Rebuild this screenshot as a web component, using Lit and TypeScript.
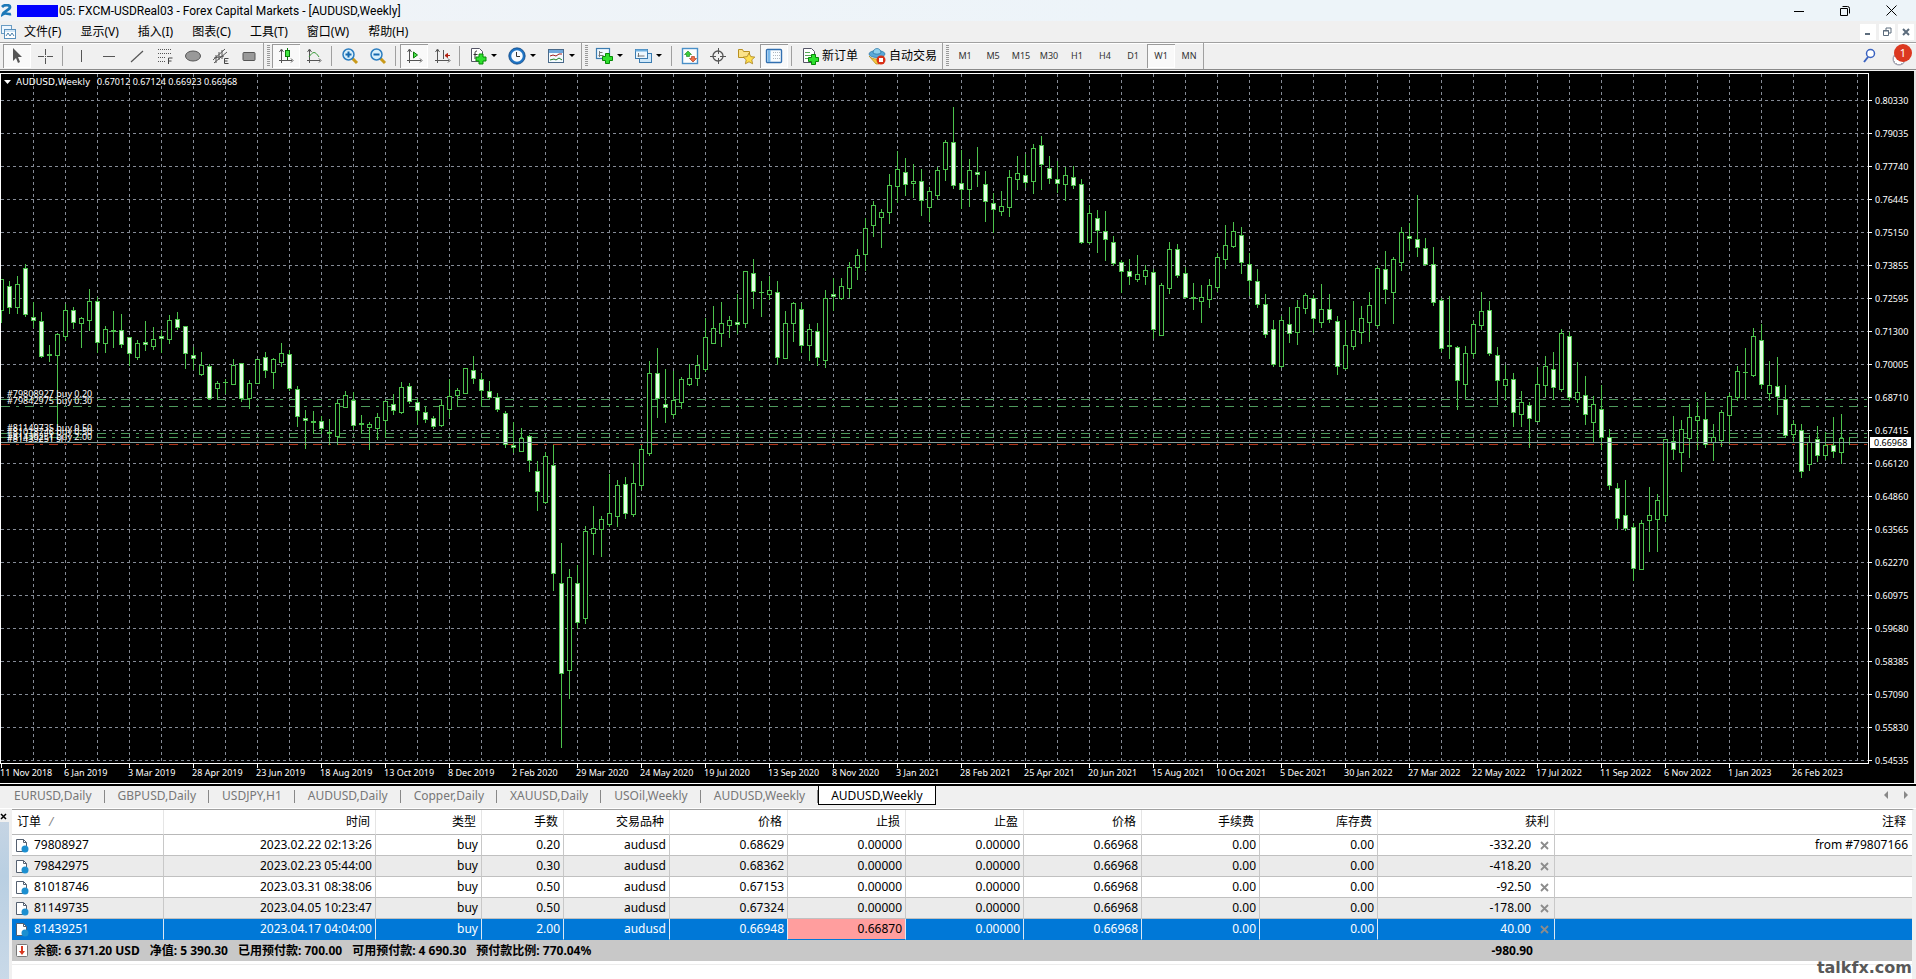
import { LitElement, html, svg, css } from "lit";
import { customElement, state } from "lit/decorators.js";
import { classMap } from "lit/directives/class-map.js";

/* Weekly bars, oldest first: kind (u hollow, d filled), high, body top, body bottom, low in plot rows. */
const BARS = `
u 279 279 310 322|d 281 286 307 313|u 276 284 307 313|d 264 268 314 316|d 302 317 320 327|d 312 321 356 357|d 345 354 355 361|u 333 334 355 433
u 304 310 336 340|d 307 310 322 328|u 317 318 323 347|u 289 301 320 330|d 297 301 342 352|u 326 329 343 352|d 311 330 331 347|d 314 330 344 347
d 337 337 353 365|u 340 343 357 359|d 321 342 344 350|u 327 339 346 349|d 330 336 338 352|u 315 320 339 343|d 312 319 327 329|d 326 326 353 368
d 347 355 358 369|u 352 365 374 375|d 364 366 398 399|u 381 383 388 398|d 379 382 382 393|u 359 365 384 384|d 363 363 398 401|u 380 383 398 408
u 359 359 383 383|d 352 357 370 377|u 358 359 372 388|u 343 353 362 366|d 350 354 388 390|d 386 389 416 426|d 410 418 420 448|d 411 421 422 433
d 416 421 428 433|d 419 432 433 444|u 400 403 436 444|u 391 395 407 407|d 392 400 425 429|d 415 423 424 432|u 422 424 427 449|u 413 417 428 439
u 401 401 420 437|d 394 404 410 414|u 382 387 412 413|d 383 386 401 403|d 398 402 410 424|d 407 412 419 422|d 416 418 426 428|u 400 405 425 426
u 379 396 409 417|u 388 390 395 406|u 368 368 393 393|d 356 370 378 383|d 373 379 390 405|d 381 391 397 398|d 393 397 409 411|d 411 413 444 447
d 422 445 447 452|u 428 438 451 451|d 435 436 460 471|d 461 471 491 510|u 452 456 502 503|d 445 465 573 590|d 543 583 673 747|u 569 577 670 698
d 565 583 622 628|u 526 531 618 623|u 506 528 533 554|u 516 519 529 556|u 474 513 524 526|u 480 485 516 526|d 477 484 513 518|u 463 483 514 516
u 445 449 485 489|u 361 373 453 455|d 348 373 398 417|d 369 404 407 422|u 371 400 414 417|u 377 379 402 408|u 364 378 384 385|u 355 365 378 385
u 318 337 369 371|u 306 328 343 343|u 302 323 333 346|u 316 320 325 337|d 294 322 324 333|u 271 271 323 327|d 259 273 291 308|d 281 292 292 316
u 276 290 294 299|d 281 292 357 364|u 311 323 358 358|u 302 303 323 341|d 303 309 345 352|u 324 329 345 360|d 323 331 357 365|u 290 298 360 367
d 278 294 296 310|u 278 286 298 299|u 262 267 288 297|u 249 255 267 279|u 218 228 254 270|u 201 205 225 236|u 209 212 217 247|u 174 185 212 223
u 151 169 186 202|d 158 172 184 195|u 164 181 183 197|d 169 181 200 215|u 187 191 207 221|u 167 170 195 199|u 140 142 169 180|d 107 142 185 188
d 150 183 189 208|u 159 170 189 206|d 147 172 174 186|d 171 184 201 221|d 193 203 209 232|u 191 206 211 215|u 170 177 207 216|u 156 173 179 189
d 154 175 182 187|u 144 148 181 193|d 136 145 164 189|d 156 168 178 183|d 161 179 183 192|u 167 175 184 200|d 166 177 185 188|d 179 184 242 243
u 205 213 242 243|d 210 218 230 252|d 211 231 239 260|d 236 242 263 265|d 260 262 271 292|d 259 271 276 284|u 255 274 279 281|u 265 270 276 284
d 269 272 329 338|u 283 285 335 335|u 242 249 288 293|d 244 249 275 277|d 267 273 297 298|d 283 297 298 309|u 285 297 301 322|u 279 285 299 307
u 253 257 287 291|u 225 245 259 268|u 222 231 246 247|d 227 235 262 273|d 253 264 280 295|d 269 281 304 307|d 294 304 334 337|d 320 329 364 366
u 316 320 366 367|d 307 324 333 342|u 300 307 332 344|u 293 295 308 313|d 295 298 318 332|u 284 309 322 327|d 294 309 319 322|d 316 321 366 374
u 320 345 368 369|u 301 330 346 349|u 306 318 332 343|u 292 305 322 341|u 266 268 325 327|d 251 269 289 303|u 257 259 292 323|u 227 232 262 270
d 223 236 238 250|d 195 239 247 256|d 238 248 264 265|d 247 264 302 305|d 298 300 348 351|d 296 345 346 358|d 346 347 380 409|u 346 353 384 398
u 321 324 353 357|u 292 311 325 329|d 301 310 353 355|d 347 355 380 404|u 365 379 385 399|d 373 379 412 426|u 391 402 414 426|d 402 405 418 447
u 367 384 421 421|u 356 366 385 396|d 352 369 387 399|u 329 333 389 391|d 332 336 397 400|u 362 392 399 402|d 376 395 414 424|u 396 404 422 442
d 385 409 437 449|d 429 437 485 489|d 483 488 518 528|d 480 515 528 530|d 523 527 568 580|u 520 523 569 569|u 487 515 520 551|u 494 500 519 551
u 439 439 515 521|d 416 441 449 459|u 420 429 452 471|u 404 417 438 457|u 402 416 420 449|d 392 419 444 447|u 424 437 442 460|u 410 412 440 446
u 393 396 415 443|u 366 371 397 400|d 348 372 372 398|u 328 336 375 376|d 324 340 384 388|u 361 385 393 400|d 357 386 396 414|d 385 399 435 437
u 420 424 434 442|d 424 430 471 477|u 435 442 464 470|d 426 439 455 461|u 432 445 455 459|d 417 445 451 457|u 414 438 452 463|d 437 442 442 444`
  .trim()
  .split(/[|\n]/)
  .map((s) => {
    const [kind, ...n] = s.trim().split(" ");
    const [high, top, bottom, low] = n.map(Number);
    return { kind, high, top, bottom, low };
  });

const PRICES = ["0.80330", "0.79035", "0.77740", "0.76445", "0.75150", "0.73855", "0.72595", "0.71300", "0.70005", "0.68710", "0.67415", "0.66120", "0.64860", "0.63565", "0.62270", "0.60975", "0.59680", "0.58385", "0.57090", "0.55830", "0.54535"];

const DATES = ["11 Nov 2018", "6 Jan 2019", "3 Mar 2019", "28 Apr 2019", "23 Jun 2019", "18 Aug 2019", "13 Oct 2019", "8 Dec 2019", "2 Feb 2020", "29 Mar 2020", "24 May 2020", "19 Jul 2020", "13 Sep 2020", "8 Nov 2020", "3 Jan 2021", "28 Feb 2021", "25 Apr 2021", "20 Jun 2021", "15 Aug 2021", "10 Oct 2021", "5 Dec 2021", "30 Jan 2022", "27 Mar 2022", "22 May 2022", "17 Jul 2022", "11 Sep 2022", "6 Nov 2022", "1 Jan 2023", "26 Feb 2023"];

const LEVELS = [
  { y: 399, cls: "open", text: "#79808927 buy 0.20" },
  { y: 406, cls: "open", text: "#79842975 buy 0.30" },
  { y: 433, cls: "open", text: "#81149735 buy 0.50" },
  { y: 437, cls: "open", text: "#81018746 buy 0.50" },
  { y: 442, cls: "", text: "#81439251 buy 2.00" },
  { y: 444, cls: "stop", text: "#81439251 sl" },
];

const MENUS = ["文件(F)", "显示(V)", "插入(I)", "图表(C)", "工具(T)", "窗口(W)", "帮助(H)"];
const FRAMES = ["M1", "M5", "M15", "M30", "H1", "H4", "D1", "W1", "MN"];
const TABS = ["EURUSD,Daily", "GBPUSD,Daily", "USDJPY,H1", "AUDUSD,Daily", "Copper,Daily", "XAUUSD,Daily", "USOil,Weekly", "AUDUSD,Weekly", "AUDUSD,Weekly"];
const HEADS = ["时间", "类型", "手数", "交易品种", "价格", "止损", "止盈", "价格", "手续费", "库存费", "获利", "注释"];
const WIDTHS = [152, 212, 106, 82, 106, 118, 118, 118, 118, 118, 118, 177];
const ORDERS = [
  ["79808927", "2023.02.22 02:13:26", "buy", "0.20", "audusd", "0.68629", "0.00000", "0.00000", "0.66968", "0.00", "0.00", "-332.20", "from #79807166"],
  ["79842975", "2023.02.23 05:44:00", "buy", "0.30", "audusd", "0.68362", "0.00000", "0.00000", "0.66968", "0.00", "0.00", "-418.20", ""],
  ["81018746", "2023.03.31 08:38:06", "buy", "0.50", "audusd", "0.67153", "0.00000", "0.00000", "0.66968", "0.00", "0.00", "-92.50", ""],
  ["81149735", "2023.04.05 10:23:47", "buy", "0.50", "audusd", "0.67324", "0.00000", "0.00000", "0.66968", "0.00", "0.00", "-178.00", ""],
  ["81439251", "2023.04.17 04:04:00", "buy", "2.00", "audusd", "0.66948", "0.66870", "0.00000", "0.66968", "0.00", "0.00", "40.00", ""],
];
const SUMMARY = ["余额: 6 371.20 USD", "净值: 5 390.30", "已用预付款: 700.00", "可用预付款: 4 690.30", "预付款比例: 770.04%"];

const plus = (x: number, y: number) => svg`<path d="M${x + 3} ${y}h4v3h3v4h-3v3h-4v-3h-3v-4h3z" fill="#2ee02e" stroke="#078a07"/>`;

/* Toolbar glyphs, each on an 18 x 18 grid. */
const GLYPHS: Record<string, unknown> = {
  cursor: svg`<path d="M5 1v13l3-3 2 5 2-1-2-5h4z" fill="#555"/>`,
  cross: svg`<path d="M9.500 2v6m0 3v6M2 9.500h6m3 0h6" stroke="#555" fill="none"/><path d="M9 9h1v1h-1z" fill="#555"/>`,
  vline: svg`<path d="M9.500 3v12" stroke="#555"/>`,
  hline: svg`<path d="M3 9.500h12" stroke="#555"/>`,
  trend: svg`<path d="M3 15 15 4" stroke="#555" stroke-width="1.200"/>`,
  fibo: svg`<path d="M2 2.500h14M2 6.500h14M2 10.500h8M2 14.500h8" stroke="#555" stroke-dasharray="1 1"/><path d="M12.500 17v-6h4m-4 3h3" stroke="#444" fill="none"/>`,
  ellipse: svg`<ellipse cx="9" cy="9" rx="7.500" ry="5" fill="#999" stroke="#555"/>`,
  channel: svg`<path d="M1 13 13 2M2 16 15 5M4 8v8M7 5v8M10 3v9M2 11l10-2" stroke="#555"/><path d="M16.500 11.500h-4v5h4m-4-2.500h3" stroke="#444" fill="none"/>`,
  rect: svg`<rect x="3" y="5.500" width="12" height="8" rx="1" fill="#999" stroke="#555"/>`,
  candle: svg`<path d="M4.500 3v13M2 13.500h13M4.500 2l-2 3m2-3 2 3M16 13.500l-2-2m2 2-2 2" stroke="#555" fill="none"/><path d="M10.500 1v12" stroke="#0a7a0a"/><rect x="8.500" y="3.500" width="4" height="6" fill="#3ee83e" stroke="#0a7a0a"/>`,
  line: svg`<path d="M4.500 3v13M2 13.500h13M4.500 2l-2 3m2-3 2 3M16 13.500l-2-2m2 2-2 2" stroke="#555" fill="none"/><path d="M4 10c4-6 6-6 10 0" stroke="#3a9a3a" fill="none"/>`,
  zoomin: svg`<path d="m11 11 5 5" stroke="#c99a1b" stroke-width="3"/><circle cx="7.500" cy="7.500" r="5.500" fill="#d9f0fb" stroke="#2c7ec0" stroke-width="1.500"/><path d="M4.500 7.500h6m-3-3v6" stroke="#1569b0" stroke-width="2"/>`,
  zoomout: svg`<path d="m11 11 5 5" stroke="#c99a1b" stroke-width="3"/><circle cx="7.500" cy="7.500" r="5.500" fill="#d9f0fb" stroke="#2c7ec0" stroke-width="1.500"/><path d="M4.500 7.500h6" stroke="#1569b0" stroke-width="2"/>`,
  scroll: svg`<path d="M4.500 3v13M2 13.500h14M4.500 2l-2 3m2-3 2 3M17 13.500l-2-2m2 2-2 2" stroke="#555" fill="none"/><path d="m8.500 5 4 3-4 3z" fill="#4ae04a" stroke="#0a7a0a"/>`,
  shift: svg`<path d="M4.500 3v13M2 13.500h14M4.500 2l-2 3m2-3 2 3M17 13.500l-2-2m2 2-2 2M10.500 3v9" stroke="#555" fill="none"/><path d="M12 8.500h5m-5 0 2.500-2v4z" stroke="#b02010" fill="#d03020"/>`,
  indicator: svg`<path d="M2.500 1.500h8l3 3v10h-11z" fill="#fff" stroke="#556"/><path d="M8 4c-2 0-2 1-2 3v5M4.500 7.500h4" stroke="#333" fill="none"/>${plus(7, 7)}`,
  clock: svg`<circle cx="9" cy="9" r="7" fill="#f6fbff" stroke="#1f74c4" stroke-width="2.500"/><circle cx="9" cy="9" r="8.200" fill="none" stroke="#0d3f78" stroke-width=".7"/><path d="M8.500 5v4.500h3.500" stroke="#333" fill="none"/>`,
  template: svg`<rect x="1.500" y="2.500" width="15" height="13" fill="#f4fbff" stroke="#4a6a8a"/><path d="M2 4.500h14" stroke="#6fa8dc" stroke-width="3"/><path d="m3 9 3-1 3 1 3-2 3 0" stroke="#a02020" fill="none"/><path d="m3 13 4-1 2 1 3-2 3 2" stroke="#208020" fill="none"/>`,
  newchart: svg`<rect x="1.500" y="1.500" width="13" height="10" fill="#eef8ff" stroke="#3c7cb0" stroke-width="1.200"/><path d="M4.500 4v6m-1-1.500h5m-4-3h3" stroke="#777"/>${plus(7.500, 6.500)}`,
  windows: svg`<rect x="5.500" y="6.500" width="12" height="9" fill="#cfe8fa" stroke="#3c7cb0"/><rect x="1.500" y="2.500" width="12" height="9" fill="#eef8ff" stroke="#3c7cb0"/><path d="M1.500 3.500h12" stroke="#6fb0e0" stroke-width="2"/><path d="M4.500 6v4m-1-1h7" stroke="#777"/>`,
  market: svg`<rect x="1.500" y="1.500" width="15" height="15" fill="#fdfeff" stroke="#4a90c8" stroke-width="1.400"/><path d="m7 4 3.500 3.500h-2v2h-3v-2h-2z" fill="#3ad03a" stroke="#157a15" stroke-width=".6"/><path d="m12 15-3.500-3.500h2v-2h3v2h2z" fill="#f07048" stroke="#a83010" stroke-width=".6"/>`,
  target: svg`<circle cx="9" cy="9" r="5" fill="none" stroke="#555" stroke-width="1.300"/><path d="M9.500 1v6m0 4v6M1 9.500h6m4 0h6" stroke="#555"/>`,
  folder: svg`<path d="M1.500 10.500v-8h4l1 2h6v6z" fill="#fbe28a" stroke="#b89020"/><path d="m12 6 1.800 3.600 4 .5-3 2.700.8 4-3.600-2-3.600 2 .8-4-3-2.700 4-.5z" fill="#ffdf50" stroke="#a8801c" stroke-width=".8"/>`,
  navigator: svg`<rect x="1.500" y="2.500" width="15" height="13" rx="1" fill="#fafdff" stroke="#3370b0" stroke-width="1.400"/><path d="M4 3v12" stroke="#7ab8ea" stroke-width="3"/><path d="M8 5.500h8M8 8.500h8M8 11.500h8" stroke="#b0b8c0" stroke-dasharray="1 1"/>`,
  order: svg`<path d="M2.500 1.500h8l3 3v11h-11z" fill="#fff" stroke="#556"/><path d="M4 5.500h5M4 8.500h6M4 11.500h4" stroke="#58a858"/>${plus(7.500, 7.500)}`,
  auto: svg`<path d="M1 9c3 4 12 4 15 0l-5 8H8z" fill="#f4c840" stroke="#b08818" stroke-width=".7"/><ellipse cx="9" cy="7" rx="8" ry="3.500" fill="#5aa8d8" stroke="#24709f" stroke-width=".7"/><path d="M5 6c0-6 8-6 8 0-2 1.500-6 1.500-8 0z" fill="#8fd0ee" stroke="#24709f" stroke-width=".7"/><circle cx="13" cy="13" r="4.500" fill="#d83018"/><rect x="11" y="11" width="4" height="4" fill="#fff"/>`,
};

const glyph = (name: string) => html`<svg class="glyph" width="18" height="18" aria-hidden="true">${GLYPHS[name]}</svg>`;

const SHEET = html`<svg class="sheet" width="14" height="15" aria-hidden="true">
  <path d="M1.500 1.500h7l3 3v9h-10z" fill="#fff" stroke="#556070" />
  <path d="M8.500 1.500v3h3" fill="none" stroke="#556070" />
  <circle cx="10" cy="11" r="3.500" fill="#1c8fd0" />
</svg>`;

@customElement("app-root")
export class AppRoot extends LitElement {
  @state() private frame = "W1";
  @state() private tab = 8;

  static styles = css`
    :host {
      display: flex;
      flex-direction: column;
      min-height: 100vh;
      position: relative;
      overflow: hidden;
      background: #f0f0f0;
      color: #000;
      font: 12px/16px "Noto Sans", "Noto Sans CJK SC", sans-serif;
    }
    * { box-sizing: border-box; }
    button { font: inherit; color: inherit; background: none; border: 0; padding: 0; margin: 0; }
    svg { display: block; flex: none; }

    .title { display: flex; align-items: center; height: 21px; padding: 0 16px 0 1px; background: linear-gradient(90deg, #f0f3f7, #edf4f9 60%); }
    .redacted { width: 41px; height: 12px; margin: 0 1px 0 5px; background: #0000ff; }
    .caption { flex: 1; font-family: Roboto, sans-serif; white-space: nowrap; }
    .sys { display: flex; gap: 28px; }
    .sys button { width: 18px; height: 18px; display: grid; place-items: center; }

    .menubar { display: flex; align-items: center; height: 21px; padding: 0 2px 0 1px; }
    .menus { display: flex; flex: 1; gap: 19px; margin-left: 8px; }
    .mdi { display: flex; gap: 3px; }
    .mdi button { width: 16px; height: 16px; background: #fff; display: grid; place-items: center; }

    .toolbar { display: flex; align-items: stretch; height: 28px; padding-left: 3px; border-top: 1px solid #a0a0a0; border-bottom: 1px solid #8a8a8a; box-shadow: inset 0 1px #fff; }
    .group { display: flex; align-items: center; padding: 2px 0; border-right: 1px solid #a0a0a0; }
    .grip { width: 8px; align-self: stretch; background: repeating-linear-gradient(#999 0 1px, transparent 1px 2px) 3px 2px / 3px 22px no-repeat; }
    .tool { width: 28px; height: 24px; display: flex; align-items: center; justify-content: center; }
    .tool.on, .frame.on { background: #f9f9f9; box-shadow: inset 1px 1px #9a9a9a, inset -1px -1px #fff; }
    .tool.drop { width: 39px; justify-content: flex-start; gap: 4px; padding-left: 5px; }
    .tool.text { width: auto; gap: 3px; padding: 0 5px; }
    .sep { width: 8px; height: 20px; background: linear-gradient(#a0a0a0, #a0a0a0) 3px 0 / 1px 100% no-repeat; }
    .frame { width: 28px; height: 24px; font-size: 9px; color: #333; }
    .end { display: flex; align-items: center; gap: 16px; margin-left: auto; padding-right: 4px; }
    .alerts { display: flex; align-items: flex-start; height: 24px; padding-left: 2px; background: radial-gradient(circle at 7px 15px, #fff 0 5px, #a8a8b4 5px 6px, transparent 7px); }
    .badge { width: 18px; height: 18px; border-radius: 9px; background: #dc3820; color: #fff; font-size: 11px; line-height: 18px; text-align: center; }

    .chart { display: flex; background: #000; color: #fff; padding-top: 2px; margin-top: 1px; font-size: 9px; line-height: 11px; border-right: 2px solid #e4e4e4; }
    .main { flex: 1; min-width: 0; }
    .plot { height: 691px; border: 1px solid #fff; position: relative; overflow: hidden; }
    .plot text { fill: #fff; }
    .plot .symbol { font-family: "DejaVu Sans", sans-serif; }
    .grid { stroke: #858b96; stroke-dasharray: 3 3; shape-rendering: crispEdges; }
    .bars { stroke: #4cc24c; fill: #000; shape-rendering: crispEdges; }
    .bars .d { fill: #e4ffe4; }
    .open { stroke: #4e9a5c; stroke-dasharray: 9 6 3 6; shape-rendering: crispEdges; }
    .stop { stroke: #b03418; stroke-dasharray: 9 6 3 6; shape-rendering: crispEdges; }
    .bid { stroke: #7f9c9c; shape-rendering: crispEdges; }
    .dates { display: flex; height: 20px; overflow: hidden; }
    .dates span { flex: none; width: 64px; padding-top: 3px; white-space: nowrap; background: linear-gradient(#fff, #fff) 1px 0 / 1px 4px no-repeat; }
    .scale { width: 45px; padding-top: 11px; position: relative; }
    .scale div { height: 33px; display: flex; align-items: center; gap: 3px; }
    .scale div::before { content: ""; width: 3px; height: 1px; background: #fff; }
    .now { position: absolute; top: 364px; left: 1px; right: 3px; padding-left: 4px; background: #fff; color: #000; }

    .tabs { display: flex; height: 24px; align-items: flex-start; background: #f0f0f0; border-top: 2px solid #000; padding: 0 6px 0 1px; color: #777; outline: 1px solid #fff; outline-offset: 0; position: relative; }
    .tabs button { padding: 2px 13px 1px; position: relative; }
    .tabs button:not(.on)::after { content: ""; position: absolute; right: 0; top: 4px; height: 13px; width: 1px; background: #888; }
    .tabs button.on { color: #000; background: #fff; border: 1px solid #000; border-top: 0; padding: 2px 12px 0; }
    .arrows { display: flex; gap: 14px; margin: 5px 2px 0 auto; }

    .terminal { display: flex; flex: 1; background: #fff; }
    .rail { width: 12px; border-right: 3px solid #f0f0f0; background: linear-gradient(#c9d6e4, #b9cfe2 40%, #c9d9e8); }
    .rail button { display: block; width: 9px; height: 14px; padding-top: 3px; background: #f0f0f0; }
    .sheetwrap { flex: 1; min-width: 0; border-top: 2px solid #a0a0a0; border-right: 4px solid #f0f0f0; }
    table { width: 100%; border-collapse: separate; border-spacing: 0; table-layout: fixed; }
    th { height: 25px; padding: 0 5px; font-weight: 400; text-align: right; border-right: 1px solid #e5e5e5; border-bottom: 1px solid #b8b8b8; }
    th:first-child { text-align: left; }
    th i { color: #888; margin-left: 8px; }
    td { height: 21px; padding: 0 3px; text-align: right; white-space: nowrap; border-right: 1px solid #c8c8c8; border-bottom: 1px solid #c0c0c0; }
    td:last-child, th:last-child { border-right: 0; }
    td:last-child { padding-right: 4px; }
    th:last-child { padding-right: 6px; }
    .id, .profit { display: flex; align-items: center; }
    .id { gap: 5px; }
    .sums { display: flex; gap: 10px; }
    .profit { justify-content: flex-end; gap: 9px; padding-right: 2px; }
    tr.alt td { background: #ebebeb; }
    tr.picked td { background: #0078d7; color: #fff; border-bottom-color: #0078d7; border-right-color: #dce8f4; }
    tr.picked td.near { background: #ff9e9e; color: #000; }
    tfoot td { background: #c8c8c8; border: 0; font-weight: 700; }
    tfoot .total { padding-right: 22px; }
    .foot { border-top: 1px solid #ececec; margin-top: 3px; }
    .mark { position: absolute; right: 4px; bottom: 2px; font: 700 16px/19px "DejaVu Sans", sans-serif; color: #585858; }
  `;

  private tool(name: string, label: string, on = false) {
    return html`<button class=${classMap({ tool: true, on })} aria-label=${label}>${glyph(name)}</button>`;
  }

  private drop(name: string, label: string) {
    return html`<button class="tool drop" aria-label=${label}>${glyph(name)}<svg width="6" height="4"><path d="M0 0h6L3 3z" /></svg></button>`;
  }

  private renderToolbar() {
    const sep = html`<span class="sep"></span>`;
    return html`<div class="toolbar" role="toolbar">
      <div class="group">
        ${this.tool("cursor", "光标", true)}${this.tool("cross", "十字准线")}${sep}
        ${this.tool("vline", "垂直线")}${this.tool("hline", "水平线")}${this.tool("trend", "趋势线")}${this.tool("fibo", "斐波那契")}
        ${this.tool("ellipse", "椭圆")}${this.tool("channel", "通道")}${this.tool("rect", "矩形")}
      </div>
      <span class="grip"></span>
      <div class="group">
        ${this.tool("candle", "阴阳烛", true)}${this.tool("line", "折线图")}${sep}
        ${this.tool("zoomin", "放大")}${this.tool("zoomout", "缩小")}${sep}
        ${this.tool("scroll", "自动滚动", true)}${this.tool("shift", "图表平移")}${sep}
        ${this.drop("indicator", "技术指标")}${this.drop("clock", "时间周期")}${this.drop("template", "模板")}
      </div>
      <span class="grip"></span>
      <div class="group">
        ${this.drop("newchart", "新图表")}${this.drop("windows", "窗口")}${sep}
        ${this.tool("market", "市场报价")}${this.tool("target", "数据窗口")}${this.tool("folder", "导航")}${this.tool("navigator", "终端", true)}${sep}
        <button class="tool text">${glyph("order")}新订单</button>
        <button class="tool text">${glyph("auto")}自动交易</button>
      </div>
      <span class="grip"></span>
      <div class="group">
        ${FRAMES.map((f) => html`<button class=${classMap({ frame: true, on: f === this.frame })} @click=${() => (this.frame = f)}>${f}</button>`)}
      </div>
      <div class="end">
        <button aria-label="搜索"><svg width="14" height="16"><circle cx="8.500" cy="5.500" r="4" fill="#fff" stroke="#3a62c0" stroke-width="1.500" /><path d="m6 9-4 5" stroke="#3a62c0" stroke-width="2" /></svg></button>
        <span class="alerts"><span class="badge">1</span></span>
      </div>
    </div>`;
  }

  private renderChart() {
    return html`<div class="chart">
      <div class="main">
        <div class="plot">
          <svg width="100%" height="689">
            <g transform="translate(-1 -74)">
              <g class="grid">
                ${Array.from({ length: 60 }, (_, i) => svg`<path d="M${33.5 + 32 * i} 74v689" />`)}
                ${PRICES.map((_, i) => svg`<line x1="1" x2="102%" y1=${100.5 + 33 * i} y2=${100.5 + 33 * i} />`)}
              </g>
              ${LEVELS.filter((l) => l.cls).map((l) => svg`<line class=${l.cls} x1="1" x2="102%" y1=${l.y + 0.5} y2=${l.y + 0.5} />`)}
              <g class="bars">
                ${BARS.map((b, i) => {
                  const x = 1 + 8 * i;
                  return svg`<path d="M${x + 0.5} ${b.high}V${b.low + 1}" />
                    ${b.bottom > b.top
                      ? svg`<rect class=${b.kind} x=${x - 1.5} y=${b.top + 0.5} width="4" height=${b.bottom - b.top} />`
                      : svg`<path d="M${x - 2} ${b.top + 0.5}h5" />`}`;
                })}
              </g>
              <line class="bid" x1="1" x2="102%" y1="442.5" y2="442.5" />
              ${LEVELS.map((l) => svg`<text x="7" y=${l.y - 2}>${l.text}</text>`)}
              <path d="M4 80h7l-3.500 4z" fill="#fff" />
              <text class="symbol" x="16" y="85">AUDUSD,Weekly</text>
              <text x="97" y="85">0.67012 0.67124 0.66923 0.66968</text>
            </g>
          </svg>
        </div>
        <div class="dates">${DATES.map((d) => html`<span>${d}</span>`)}</div>
      </div>
      <div class="scale">
        ${PRICES.map((p) => html`<div>${p}</div>`)}
        <span class="now">0.66968</span>
      </div>
    </div>`;
  }

  private renderTable() {
    return html`<table>
      <colgroup>${WIDTHS.map((w) => html`<col style="width:${w}px" />`)}<col /></colgroup>
      <thead><tr><th>订单<i>/</i></th>${HEADS.map((h) => html`<th>${h}</th>`)}</tr></thead>
      <tbody>
        ${ORDERS.map(
          (o, r) => html`<tr class=${classMap({ alt: r % 2 === 1, picked: r === 4 })}>
            ${o.map((v, c) =>
              c === 0
                ? html`<td><span class="id">${SHEET}${v}</span></td>`
                : c === 11
                  ? html`<td><span class="profit">${v}<button aria-label="平仓"><svg width="9" height="9"><path d="m1 1 7 7m0-7-7 7" stroke="#8c8c8c" stroke-width="1.800" /></svg></button></span></td>`
                  : html`<td class=${classMap({ near: r === 4 && c === 6 })}>${v}</td>`
            )}
          </tr>`
        )}
      </tbody>
      <tfoot><tr>
        <td colspan="11"><span class="id"><svg width="14" height="15"><rect x="1.500" y="1.500" width="11" height="12" rx="1" fill="#fff" stroke="#777" /><path d="M7 3l3 4H8v5H6V7H4z" transform="rotate(180 7 7.500)" fill="#d83820" /></svg><span class="sums">${SUMMARY.map((s) => html`<span>${s}</span>`)}</span></span></td>
        <td class="total">-980.90</td><td></td>
      </tr></tfoot>
    </table>`;
  }

  render() {
    return html`
      <header class="title">
        <svg width="11" height="13" aria-hidden="true"><path d="M1 3c3-3 8-2 8 0 0 3-6 4-7 7 3-2 5 1 8 0" fill="none" stroke="#1c78b8" stroke-width="2.800" /></svg>
        <span class="redacted"></span>
        <span class="caption">05: FXCM-USDReal03 - Forex Capital Markets - [AUDUSD,Weekly]</span>
        <div class="sys">
          <button aria-label="最小化"><svg width="10" height="10"><path d="M0 5.500h10" stroke="#000" /></svg></button>
          <button aria-label="还原"><svg width="10" height="10"><path d="M.5 2.500h7v7h-7zM2.500.5h5q2 0 2 2v5" fill="none" stroke="#000" /></svg></button>
          <button aria-label="关闭"><svg width="11" height="11"><path d="m.5.5 10 10m0-10-10 10" stroke="#000" /></svg></button>
        </div>
      </header>
      <nav class="menubar">
        <svg width="15" height="14" aria-hidden="true"><rect x=".5" y=".5" width="10" height="8" fill="#eef7ff" stroke="#6a9cc4" /><rect x="3.500" y="4.500" width="11" height="9" fill="#fff" stroke="#5a90bc" /><path d="M4 6h10" stroke="#a8cfee" /><path d="m5 11 2-3 2 3 2-3 2 3" fill="none" stroke="#4a80ac" /></svg>
        <div class="menus">${MENUS.map((m) => html`<button>${m}</button>`)}</div>
        <div class="mdi">
          <button aria-label="最小化图表"><svg width="8" height="8"><path d="M1 6h5" stroke="#5c6c7c" stroke-width="2" /></svg></button>
          <button aria-label="还原图表"><svg width="9" height="9"><path d="M.5 3.500h5v5h-5zM3 3V1h5v5H6M0 4h6" fill="none" stroke="#5c6c7c" /></svg></button>
          <button aria-label="关闭图表"><svg width="8" height="8"><path d="m1 1 6 6m0-6-6 6" stroke="#5c6c7c" stroke-width="2" /></svg></button>
        </div>
      </nav>
      ${this.renderToolbar()} ${this.renderChart()}
      <div class="tabs">
        ${TABS.map((t, i) => html`<button class=${classMap({ on: i === this.tab })} @click=${() => (this.tab = i)}>${t}</button>`)}
        <span class="arrows">
          <svg width="5" height="8"><path d="M4 0v8L0 4z" fill="#888" /></svg>
          <svg width="5" height="8"><path d="M1 0v8l4-4z" fill="#888" /></svg>
        </span>
      </div>
      <section class="terminal">
        <div class="rail"><button aria-label="关闭终端"><svg width="7" height="7"><path d="m1 1 5 5m0-5-5 5" stroke="#000" stroke-width="1.500" /></svg></button></div>
        <div class="sheetwrap">${this.renderTable()}<div class="foot"></div></div>
      </section>
      <span class="mark">talkfx.com</span>
    `;
  }
}
